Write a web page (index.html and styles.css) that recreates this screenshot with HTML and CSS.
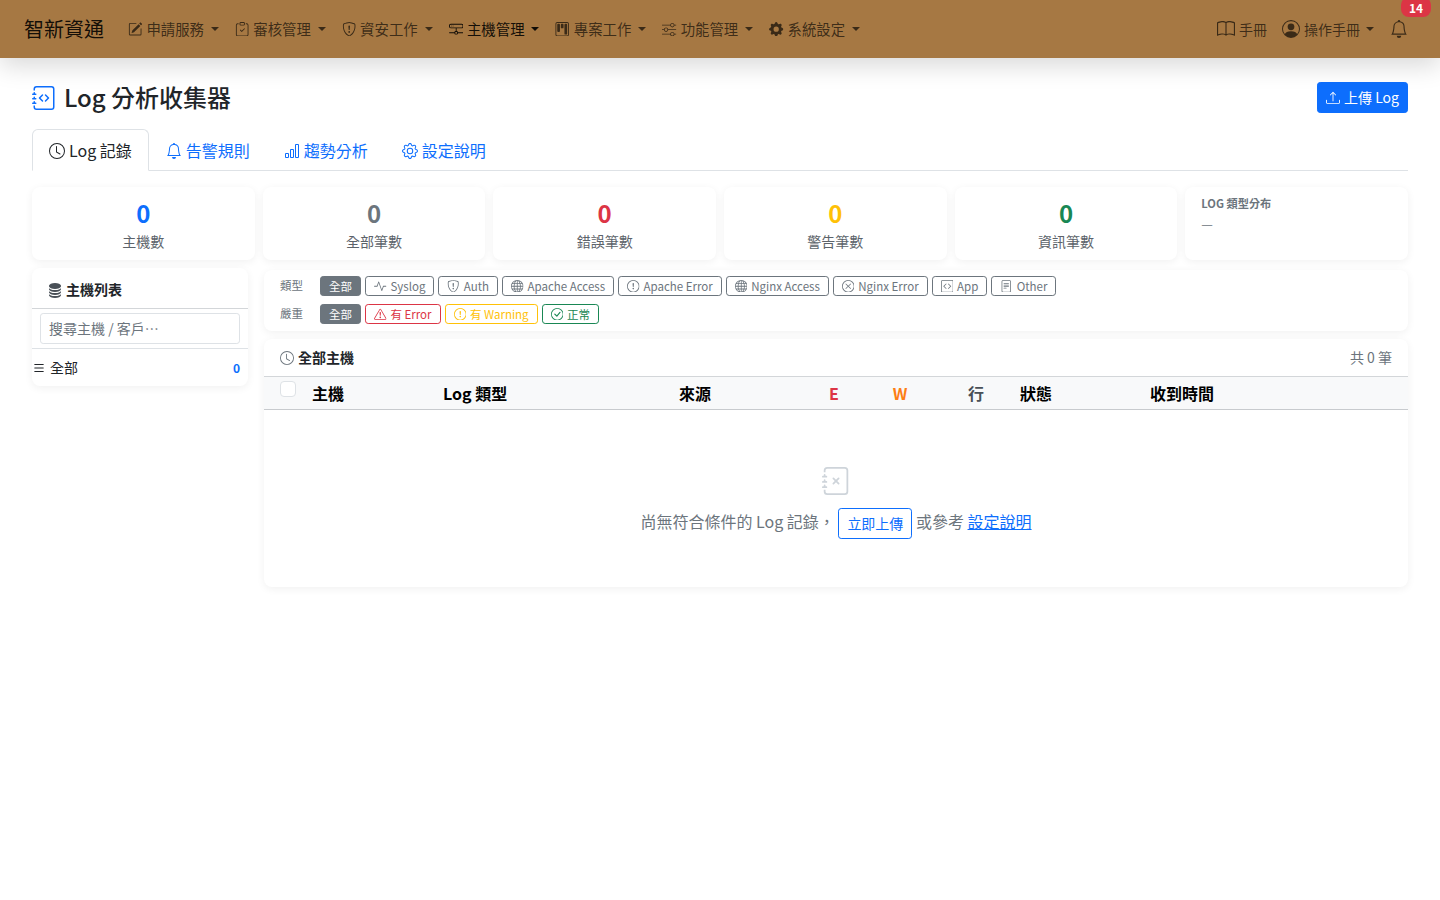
FILE: index.html
```html
<!DOCTYPE html>
<html lang="zh-Hant">
<head>
<meta charset="utf-8">
<title>Log 分析收集器</title>
<link rel="stylesheet" href="styles.css">
</head>
<body>
<svg class="sprite" xmlns="http://www.w3.org/2000/svg" aria-hidden="true">
<symbol id="pencil" viewBox="0 0 16 16"><path d="M15.502 1.94a.5.5 0 0 1 0 .706L14.459 3.69l-2-2L13.502.646a.5.5 0 0 1 .707 0l1.293 1.293zm-1.75 2.456-2-2L4.939 9.21a.5.5 0 0 0-.121.196l-.805 2.414a.25.25 0 0 0 .316.316l2.414-.805a.5.5 0 0 0 .196-.12l6.813-6.814z"/><path fill-rule="evenodd" d="M1 13.5A1.5 1.5 0 0 0 2.5 15h11a1.5 1.5 0 0 0 1.5-1.5v-6a.5.5 0 0 0-1 0v6a.5.5 0 0 1-.5.5h-11a.5.5 0 0 1-.5-.5v-11a.5.5 0 0 1 .5-.5H9a.5.5 0 0 0 0-1H2.5A1.5 1.5 0 0 0 1 2.5z"/></symbol>
<symbol id="clipcheck" viewBox="0 0 16 16"><path fill-rule="evenodd" d="M10.854 7.146a.5.5 0 0 1 0 .708l-3 3a.5.5 0 0 1-.708 0l-1.5-1.5a.5.5 0 1 1 .708-.708L7.5 9.793l2.646-2.647a.5.5 0 0 1 .708 0"/><path d="M4 1.5H3a2 2 0 0 0-2 2V14a2 2 0 0 0 2 2h10a2 2 0 0 0 2-2V3.5a2 2 0 0 0-2-2h-1v1h1a1 1 0 0 1 1 1V14a1 1 0 0 1-1 1H3a1 1 0 0 1-1-1V3.5a1 1 0 0 1 1-1h1z"/><path d="M9.5 1a.5.5 0 0 1 .5.5v1a.5.5 0 0 1-.5.5h-3a.5.5 0 0 1-.5-.5v-1a.5.5 0 0 1 .5-.5zm-3-1A1.5 1.5 0 0 0 5 1.5v1A1.5 1.5 0 0 0 6.5 4h3A1.5 1.5 0 0 0 11 2.5v-1A1.5 1.5 0 0 0 9.5 0z"/></symbol>
<symbol id="shield" viewBox="0 0 16 16"><path d="M5.338 1.59a61 61 0 0 0-2.837.856.48.48 0 0 0-.328.39c-.554 4.157.726 7.19 2.253 9.188a10.7 10.7 0 0 0 2.287 2.233c.346.244.652.42.893.533q.18.085.293.118a1 1 0 0 0 .101.025 1 1 0 0 0 .1-.025q.114-.034.294-.118c.24-.113.547-.29.893-.533a10.7 10.7 0 0 0 2.287-2.233c1.527-1.997 2.807-5.031 2.253-9.188a.48.48 0 0 0-.328-.39c-.651-.213-1.75-.56-2.837-.855C9.552 1.29 8.531 1.067 8 1.067c-.53 0-1.552.223-2.662.524zM5.072.56C6.157.265 7.31 0 8 0s1.843.265 2.928.56c1.11.3 2.229.655 2.887.87a1.54 1.54 0 0 1 1.044 1.262c.596 4.477-.787 7.795-2.465 9.99a11.8 11.8 0 0 1-2.517 2.453 7 7 0 0 1-1.048.625c-.28.132-.581.24-.829.24s-.548-.108-.829-.24a7 7 0 0 1-1.048-.625 11.8 11.8 0 0 1-2.517-2.453C1.928 10.487.545 7.169 1.141 2.692A1.54 1.54 0 0 1 2.185 1.43 63 63 0 0 1 5.072.56"/><path d="M7.001 11a1 1 0 1 1 2 0 1 1 0 0 1-2 0M7.1 4.995a.905.905 0 1 1 1.8 0l-.35 3.507a.553.553 0 0 1-1.1 0z"/></symbol>
<symbol id="hdd" viewBox="0 0 16 16"><path d="M4.5 5a.5.5 0 1 0 0-1 .5.5 0 0 0 0 1M3 4.5a.5.5 0 1 1-1 0 .5.5 0 0 1 1 0"/><path d="M0 4a2 2 0 0 1 2-2h12a2 2 0 0 1 2 2v1a2 2 0 0 1-2 2H8.5v3a1.5 1.5 0 0 1 1.5 1.5h5.5a.5.5 0 0 1 0 1H10A1.5 1.5 0 0 1 8.5 14h-1A1.5 1.5 0 0 1 6 12.5H.5a.5.5 0 0 1 0-1H6A1.5 1.5 0 0 1 7.5 10V7H2a2 2 0 0 1-2-2zm1 0v1a1 1 0 0 0 1 1h12a1 1 0 0 0 1-1V4a1 1 0 0 0-1-1H2a1 1 0 0 0-1 1m6 7.5v1a.5.5 0 0 0 .5.5h1a.5.5 0 0 0 .5-.5v-1a.5.5 0 0 0-.5-.5h-1a.5.5 0 0 0-.5.5"/></symbol>
<symbol id="kanban" viewBox="0 0 16 16"><path d="M13.5 1a1 1 0 0 1 1 1v12a1 1 0 0 1-1 1h-11a1 1 0 0 1-1-1V2a1 1 0 0 1 1-1zm-11-1a2 2 0 0 0-2 2v12a2 2 0 0 0 2 2h11a2 2 0 0 0 2-2V2a2 2 0 0 0-2-2z"/><path d="M6.5 3a1 1 0 0 1 1-1h1a1 1 0 0 1 1 1v3a1 1 0 0 1-1 1h-1a1 1 0 0 1-1-1zm-4 0a1 1 0 0 1 1-1h1a1 1 0 0 1 1 1v7a1 1 0 0 1-1 1h-1a1 1 0 0 1-1-1zm8 0a1 1 0 0 1 1-1h1a1 1 0 0 1 1 1v10a1 1 0 0 1-1 1h-1a1 1 0 0 1-1-1z"/></symbol>
<symbol id="sliders" viewBox="0 0 16 16"><path fill-rule="evenodd" d="M11.5 2a1.5 1.5 0 1 0 0 3 1.5 1.5 0 0 0 0-3M9.05 3a2.5 2.5 0 0 1 4.9 0H16v1h-2.05a2.5 2.5 0 0 1-4.9 0H0V3zM4.5 7a1.5 1.5 0 1 0 0 3 1.5 1.5 0 0 0 0-3M2.05 8a2.5 2.5 0 0 1 4.9 0H16v1H6.95a2.5 2.5 0 0 1-4.9 0H0V8zm9.45 4a1.5 1.5 0 1 0 0 3 1.5 1.5 0 0 0 0-3m-2.45 1a2.5 2.5 0 0 1 4.9 0H16v1h-2.05a2.5 2.5 0 0 1-4.9 0H0v-1z"/></symbol>
<symbol id="gearfill" viewBox="0 0 16 16"><path d="M9.405 1.05c-.413-1.4-2.397-1.4-2.81 0l-.1.34a1.464 1.464 0 0 1-2.105.872l-.31-.17c-1.283-.698-2.686.705-1.987 1.987l.169.311c.446.82.023 1.841-.872 2.105l-.34.1c-1.4.413-1.4 2.397 0 2.81l.34.1a1.464 1.464 0 0 1 .872 2.105l-.17.31c-.698 1.283.705 2.686 1.987 1.987l.311-.169a1.464 1.464 0 0 1 2.105.872l.1.34c.413 1.4 2.397 1.4 2.81 0l.1-.34a1.464 1.464 0 0 1 2.105-.872l.31.17c1.283.698 2.686-.705 1.987-1.987l-.169-.311a1.464 1.464 0 0 1 .872-2.105l.34-.1c1.4-.413 1.4-2.397 0-2.81l-.34-.1a1.464 1.464 0 0 1-.872-2.105l.17-.31c.698-1.283-.705-2.686-1.987-1.987l-.311.169a1.464 1.464 0 0 1-2.105-.872zM8 10.93a2.929 2.929 0 1 1 0-5.86 2.929 2.929 0 0 1 0 5.858z"/></symbol>
<symbol id="book" viewBox="0 0 16 16"><path d="M1 2.828c.885-.37 2.154-.769 3.388-.893 1.33-.134 2.458.063 3.112.752v9.746c-.935-.53-2.12-.603-3.213-.493-1.18.12-2.37.461-3.287.811zm7.5-.141c.654-.689 1.782-.886 3.112-.752 1.234.124 2.503.523 3.388.893v9.923c-.918-.35-2.107-.692-3.287-.81-1.094-.111-2.278-.039-3.213.492zM8 1.783C7.015.936 5.587.81 4.287.94c-1.514.153-3.042.672-3.994 1.105A.5.5 0 0 0 0 2.5v11a.5.5 0 0 0 .707.455c.882-.4 2.303-.881 3.68-1.02 1.409-.142 2.59.087 3.223.877a.5.5 0 0 0 .78 0c.633-.79 1.814-1.019 3.222-.877 1.378.139 2.8.62 3.681 1.02A.5.5 0 0 0 16 13.5v-11a.5.5 0 0 0-.293-.455c-.952-.433-2.48-.952-3.994-1.105C10.413.809 8.985.936 8 1.783"/></symbol>
<symbol id="person" viewBox="0 0 16 16"><path d="M11 6a3 3 0 1 1-6 0 3 3 0 0 1 6 0"/><path fill-rule="evenodd" d="M0 8a8 8 0 1 1 16 0A8 8 0 0 1 0 8m8-7a7 7 0 0 0-5.468 11.37C3.242 11.226 4.805 10 8 10s4.757 1.225 5.468 2.37A7 7 0 0 0 8 1"/></symbol>
<symbol id="bell" viewBox="0 0 16 16"><path d="M8 16a2 2 0 0 0 2-2H6a2 2 0 0 0 2 2M8 1.918l-.797.161A4 4 0 0 0 4 6c0 .628-.134 2.197-.459 3.742-.16.767-.376 1.566-.663 2.258h10.244c-.287-.692-.502-1.49-.663-2.258C12.134 8.197 12 6.628 12 6a4 4 0 0 0-3.203-3.92zM14.22 12c.223.447.481.801.78 1H1c.299-.199.557-.553.78-1C2.68 10.2 3 6.88 3 6c0-2.42 1.72-4.44 4.005-4.901a1 1 0 1 1 1.99 0A5 5 0 0 1 13 6c0 .88.32 4.2 1.22 6"/></symbol>
<symbol id="clock" viewBox="0 0 16 16"><path d="M8 3.5a.5.5 0 0 0-1 0V9a.5.5 0 0 0 .252.434l3.5 2a.5.5 0 0 0 .496-.868L8 8.71z"/><path d="M8 16A8 8 0 1 0 8 0a8 8 0 0 0 0 16m7-8A7 7 0 1 1 1 8a7 7 0 0 1 14 0"/></symbol>
<symbol id="barchart" viewBox="0 0 16 16"><path d="M4 11H2v3h2zm5-4H7v7h2zm5-5v12h-2V2zm-2-1a1 1 0 0 0-1 1v12a1 1 0 0 0 1 1h2a1 1 0 0 0 1-1V2a1 1 0 0 0-1-1zM6 7a1 1 0 0 1 1-1h2a1 1 0 0 1 1 1v7a1 1 0 0 1-1 1H7a1 1 0 0 1-1-1zm-5 4a1 1 0 0 1 1-1h2a1 1 0 0 1 1 1v3a1 1 0 0 1-1 1H2a1 1 0 0 1-1-1z"/></symbol>
<symbol id="gear" viewBox="0 0 16 16"><path d="M8 4.754a3.246 3.246 0 1 0 0 6.492 3.246 3.246 0 0 0 0-6.492M5.754 8a2.246 2.246 0 1 1 4.492 0 2.246 2.246 0 0 1-4.492 0"/><path d="M9.796 1.343c-.527-1.79-3.065-1.79-3.592 0l-.094.319a.873.873 0 0 1-1.255.52l-.292-.16c-1.64-.892-3.433.902-2.54 2.541l.159.292a.873.873 0 0 1-.52 1.255l-.319.094c-1.79.527-1.79 3.065 0 3.592l.319.094a.873.873 0 0 1 .52 1.255l-.16.292c-.892 1.64.901 3.434 2.541 2.54l.292-.159a.873.873 0 0 1 1.255.52l.094.319c.527 1.79 3.065 1.79 3.592 0l.094-.319a.873.873 0 0 1 1.255-.52l.292.16c1.64.893 3.434-.902 2.54-2.541l-.159-.292a.873.873 0 0 1 .52-1.255l.319-.094c1.79-.527 1.79-3.065 0-3.592l-.319-.094a.873.873 0 0 1-.52-1.255l.16-.292c.893-1.64-.902-3.433-2.541-2.54l-.292.159a.873.873 0 0 1-1.255-.52zm-2.633.283c.246-.835 1.428-.835 1.674 0l.094.319a1.873 1.873 0 0 0 2.693 1.115l.291-.16c.764-.415 1.6.42 1.184 1.185l-.159.292a1.873 1.873 0 0 0 1.116 2.692l.318.094c.835.246.835 1.428 0 1.674l-.319.094a1.873 1.873 0 0 0-1.115 2.693l.16.291c.415.764-.42 1.6-1.185 1.184l-.291-.159a1.873 1.873 0 0 0-2.693 1.116l-.094.318c-.246.835-1.428.835-1.674 0l-.094-.319a1.873 1.873 0 0 0-2.692-1.115l-.292.16c-.764.415-1.6-.42-1.184-1.185l.159-.291A1.873 1.873 0 0 0 1.945 8.93l-.319-.094c-.835-.246-.835-1.428 0-1.674l.319-.094A1.873 1.873 0 0 0 3.06 4.377l-.16-.292c-.415-.764.42-1.6 1.185-1.184l.292.159a1.873 1.873 0 0 0 2.692-1.115z"/></symbol>
<symbol id="jcode" viewBox="0 0 16 16"><path d="M8.646 5.646a.5.5 0 0 1 .708 0l2 2a.5.5 0 0 1 0 .708l-2 2a.5.5 0 0 1-.708-.708L10.293 8 8.646 6.354a.5.5 0 0 1 0-.708m-1.292 0a.5.5 0 0 0-.708 0l-2 2a.5.5 0 0 0 0 .708l2 2a.5.5 0 0 0 .708-.708L5.707 8l1.647-1.646a.5.5 0 0 0 0-.708"/><path d="M3 0h10a2 2 0 0 1 2 2v12a2 2 0 0 1-2 2H3a2 2 0 0 1-2-2v-1h1v1a1 1 0 0 0 1 1h10a1 1 0 0 0 1-1V2a1 1 0 0 0-1-1H3a1 1 0 0 0-1 1v1H1V2a2 2 0 0 1 2-2"/><path d="M1 5v-.5a.5.5 0 0 1 1 0V5h.5a.5.5 0 0 1 0 1h-2a.5.5 0 0 1 0-1zm0 3v-.5a.5.5 0 0 1 1 0V8h.5a.5.5 0 0 1 0 1h-2a.5.5 0 0 1 0-1zm0 3v-.5a.5.5 0 0 1 1 0v.5h.5a.5.5 0 0 1 0 1h-2a.5.5 0 0 1 0-1z"/></symbol>
<symbol id="jx" viewBox="0 0 16 16"><path d="M6.146 6.146a.5.5 0 0 1 .708 0L8 7.293l1.146-1.147a.5.5 0 1 1 .708.708L8.707 8l1.147 1.146a.5.5 0 0 1-.708.708L8 8.707 6.854 9.854a.5.5 0 0 1-.708-.708L7.293 8 6.146 6.854a.5.5 0 0 1 0-.708"/><path d="M3 0h10a2 2 0 0 1 2 2v12a2 2 0 0 1-2 2H3a2 2 0 0 1-2-2v-1h1v1a1 1 0 0 0 1 1h10a1 1 0 0 0 1-1V2a1 1 0 0 0-1-1H3a1 1 0 0 0-1 1v1H1V2a2 2 0 0 1 2-2"/><path d="M1 5v-.5a.5.5 0 0 1 1 0V5h.5a.5.5 0 0 1 0 1h-2a.5.5 0 0 1 0-1zm0 3v-.5a.5.5 0 0 1 1 0V8h.5a.5.5 0 0 1 0 1h-2a.5.5 0 0 1 0-1zm0 3v-.5a.5.5 0 0 1 1 0v.5h.5a.5.5 0 0 1 0 1h-2a.5.5 0 0 1 0-1z"/></symbol>
<symbol id="upload" viewBox="0 0 16 16"><path d="M.5 9.9a.5.5 0 0 1 .5.5v2.5a1 1 0 0 0 1 1h12a1 1 0 0 0 1-1v-2.5a.5.5 0 0 1 1 0v2.5a2 2 0 0 1-2 2H2a2 2 0 0 1-2-2v-2.5a.5.5 0 0 1 .5-.5"/><path d="M7.646 1.146a.5.5 0 0 1 .708 0l3 3a.5.5 0 0 1-.708.708L8.5 2.707V11.5a.5.5 0 0 1-1 0V2.707L5.354 4.854a.5.5 0 1 1-.708-.708z"/></symbol>
<symbol id="activity" viewBox="0 0 16 16"><path fill-rule="evenodd" d="M6 2a.5.5 0 0 1 .47.33L10 12.036l1.53-4.208A.5.5 0 0 1 12 7.5h3.5a.5.5 0 0 1 0 1h-3.15l-1.88 5.17a.5.5 0 0 1-.94 0L6 3.964 4.47 8.171A.5.5 0 0 1 4 8.5H.5a.5.5 0 0 1 0-1h3.15l1.88-5.17A.5.5 0 0 1 6 2"/></symbol>
<symbol id="globe" viewBox="0 0 16 16"><path d="M0 8a8 8 0 1 1 16 0A8 8 0 0 1 0 8m7.5-6.923c-.67.204-1.335.82-1.887 1.855A8 8 0 0 0 5.145 4H7.5zM4.09 4a9.3 9.3 0 0 1 .64-1.539 7 7 0 0 1 .597-.933A7.03 7.03 0 0 0 2.255 4zm-.582 3.5c.03-.877.138-1.718.312-2.5H1.674a7 7 0 0 0-.656 2.5zM4.847 5a12.5 12.5 0 0 0-.338 2.5H7.5V5zM8.5 5v2.5h2.99a12.5 12.5 0 0 0-.337-2.5zM4.51 8.5a12.5 12.5 0 0 0 .337 2.5H7.5V8.5zm3.99 0V11h2.653c.187-.765.306-1.608.338-2.5zM5.145 12q.208.58.468 1.068c.552 1.035 1.218 1.65 1.887 1.855V12zm.182 2.472a7 7 0 0 1-.597-.933A9.3 9.3 0 0 1 4.09 12H2.255a7 7 0 0 0 3.072 2.472M3.82 11a13.7 13.7 0 0 1-.312-2.5h-2.49c.062.89.291 1.733.656 2.5zm6.853 3.472A7 7 0 0 0 13.745 12H11.91a9.3 9.3 0 0 1-.64 1.539 7 7 0 0 1-.597.933M8.5 12v2.923c.67-.204 1.335-.82 1.887-1.855q.26-.487.468-1.068zm3.68-1h2.146c.365-.767.594-1.61.656-2.5h-2.49a13.7 13.7 0 0 1-.312 2.5m2.802-3.5a7 7 0 0 0-.656-2.5H12.18c.174.782.282 1.623.312 2.5zM11.27 2.461c.247.464.462.98.64 1.539h1.835a7 7 0 0 0-3.072-2.472c.218.284.418.598.597.933M10.855 4a8 8 0 0 0-.468-1.068C9.835 1.897 9.17 1.282 8.5 1.077V4z"/></symbol>
<symbol id="excl" viewBox="0 0 16 16"><path d="M8 15A7 7 0 1 1 8 1a7 7 0 0 1 0 14m0 1A8 8 0 1 0 8 0a8 8 0 0 0 0 16"/><path d="M7.002 11a1 1 0 1 1 2 0 1 1 0 0 1-2 0M7.1 4.995a.905.905 0 1 1 1.8 0l-.35 3.507a.552.552 0 0 1-1.1 0z"/></symbol>
<symbol id="xcircle" viewBox="0 0 16 16"><path d="M8 15A7 7 0 1 1 8 1a7 7 0 0 1 0 14m0 1A8 8 0 1 0 8 0a8 8 0 0 0 0 16"/><path d="M4.646 4.646a.5.5 0 0 1 .708 0L8 7.293l2.646-2.647a.5.5 0 0 1 .708.708L8.707 8l2.647 2.646a.5.5 0 0 1-.708.708L8 8.707l-2.646 2.647a.5.5 0 0 1-.708-.708L7.293 8 4.646 5.354a.5.5 0 0 1 0-.708"/></symbol>
<symbol id="check" viewBox="0 0 16 16"><path d="M8 15A7 7 0 1 1 8 1a7 7 0 0 1 0 14m0 1A8 8 0 1 0 8 0a8 8 0 0 0 0 16"/><path d="m10.97 4.97-.02.022-3.473 4.425-2.093-2.094a.75.75 0 0 0-1.06 1.06L6.97 11.03a.75.75 0 0 0 1.079-.02l3.992-4.99a.75.75 0 0 0-1.071-1.05"/></symbol>
<symbol id="codesq" viewBox="0 0 16 16"><path d="M14 1a1 1 0 0 1 1 1v12a1 1 0 0 1-1 1H2a1 1 0 0 1-1-1V2a1 1 0 0 1 1-1zM2 0a2 2 0 0 0-2 2v12a2 2 0 0 0 2 2h12a2 2 0 0 0 2-2V2a2 2 0 0 0-2-2z"/><path d="M6.854 4.646a.5.5 0 0 1 0 .708L4.207 8l2.647 2.646a.5.5 0 0 1-.708.708l-3-3a.5.5 0 0 1 0-.708l3-3a.5.5 0 0 1 .708 0m2.292 0a.5.5 0 0 0 0 .708L11.793 8l-2.647 2.646a.5.5 0 0 0 .708.708l3-3a.5.5 0 0 0 0-.708l-3-3a.5.5 0 0 0-.708 0"/></symbol>
<symbol id="filetext" viewBox="0 0 16 16"><path d="M5 4a.5.5 0 0 0 0 1h6a.5.5 0 0 0 0-1zm-.5 2.5A.5.5 0 0 1 5 6h6a.5.5 0 0 1 0 1H5a.5.5 0 0 1-.5-.5M5 8a.5.5 0 0 0 0 1h6a.5.5 0 0 0 0-1zm0 2a.5.5 0 0 0 0 1h3a.5.5 0 0 0 0-1z"/><path d="M2 2a2 2 0 0 1 2-2h8a2 2 0 0 1 2 2v12a2 2 0 0 1-2 2H4a2 2 0 0 1-2-2zm10-1H4a1 1 0 0 0-1 1v12a1 1 0 0 0 1 1h8a1 1 0 0 0 1-1V2a1 1 0 0 0-1-1"/></symbol>
<symbol id="warn" viewBox="0 0 16 16"><path d="M7.938 2.016A.13.13 0 0 1 8.002 2a.13.13 0 0 1 .063.016.15.15 0 0 1 .054.057l6.857 11.667c.036.06.035.124.002.183a.2.2 0 0 1-.054.06.1.1 0 0 1-.066.017H1.146a.1.1 0 0 1-.066-.017.2.2 0 0 1-.054-.06.18.18 0 0 1 .002-.183L7.884 2.073a.15.15 0 0 1 .054-.057m1.044-.45a1.13 1.13 0 0 0-1.96 0L.165 13.233c-.457.778.091 1.767.98 1.767h13.713c.889 0 1.438-.99.98-1.767z"/><path d="M7.002 12a1 1 0 1 1 2 0 1 1 0 0 1-2 0M7.1 5.995a.905.905 0 1 1 1.8 0l-.35 3.507a.552.552 0 0 1-1.1 0z"/></symbol>
<symbol id="db" viewBox="0 0 16 16"><path d="M3.904 1.777C4.978 1.289 6.427 1 8 1s3.022.289 4.096.777C13.125 2.245 14 2.993 14 4s-.875 1.755-1.904 2.223C11.022 6.711 9.573 7 8 7s-3.022-.289-4.096-.777C2.875 5.755 2 5.007 2 4s.875-1.755 1.904-2.223"/><path d="M2 6.161V7c0 1.007.875 1.755 1.904 2.223C4.978 9.71 6.427 10 8 10s3.022-.289 4.096-.777C13.125 8.755 14 8.007 14 7v-.839c-.457.432-1.004.751-1.49.972C11.278 7.693 9.682 8 8 8s-3.278-.307-4.51-.867c-.486-.22-1.033-.54-1.49-.972"/><path d="M2 9.161V10c0 1.007.875 1.755 1.904 2.223C4.978 12.711 6.427 13 8 13s3.022-.289 4.096-.777C13.125 11.755 14 11.007 14 10v-.839c-.457.432-1.004.751-1.49.972-1.232.56-2.828.867-4.51.867s-3.278-.307-4.51-.867c-.486-.22-1.033-.54-1.49-.972"/><path d="M2 12.161V13c0 1.007.875 1.755 1.904 2.223C4.978 15.711 6.427 16 8 16s3.022-.289 4.096-.777C13.125 14.755 14 14.007 14 13v-.839c-.457.432-1.004.751-1.49.972-1.232.56-2.828.867-4.51.867s-3.278-.307-4.51-.867c-.486-.22-1.033-.54-1.49-.972"/></symbol>
<symbol id="list" viewBox="0 0 16 16"><path fill-rule="evenodd" d="M2.5 12a.5.5 0 0 1 .5-.5h10a.5.5 0 0 1 0 1H3a.5.5 0 0 1-.5-.5m0-4a.5.5 0 0 1 .5-.5h10a.5.5 0 0 1 0 1H3a.5.5 0 0 1-.5-.5m0-4a.5.5 0 0 1 .5-.5h10a.5.5 0 0 1 0 1H3a.5.5 0 0 1-.5-.5"/></symbol>
</svg>

<nav class="navbar">
  <a class="brand">智新資通</a>
  <ul class="nav-list">
    <li class="nav-item"><svg class="ico"><use href="#pencil"/></svg>申請服務<i class="caret"></i></li>
    <li class="nav-item"><svg class="ico"><use href="#clipcheck"/></svg>審核管理<i class="caret"></i></li>
    <li class="nav-item"><svg class="ico"><use href="#shield"/></svg>資安工作<i class="caret"></i></li>
    <li class="nav-item is-active"><svg class="ico"><use href="#hdd"/></svg>主機管理<i class="caret"></i></li>
    <li class="nav-item"><svg class="ico"><use href="#kanban"/></svg>專案工作<i class="caret"></i></li>
    <li class="nav-item"><svg class="ico"><use href="#sliders"/></svg>功能管理<i class="caret"></i></li>
    <li class="nav-item"><svg class="ico"><use href="#gearfill"/></svg>系統設定<i class="caret"></i></li>
  </ul>
  <ul class="nav-right">
    <li class="nav-item nav-manual"><svg class="ico ico-book"><use href="#book"/></svg>手冊</li>
    <li class="nav-item"><svg class="ico ico-person"><use href="#person"/></svg>操作手冊<i class="caret"></i></li>
    <li class="nav-bell"><svg class="ico ico-bell"><use href="#bell"/></svg><span class="badge">14</span></li>
  </ul>
</nav>

<main class="page">
  <header class="page-head">
    <h1 class="page-title"><svg class="ico ico-title"><use href="#jcode"/></svg>Log 分析收集器</h1>
    <button class="btn-upload"><svg class="ico"><use href="#upload"/></svg>上傳 Log</button>
  </header>

  <ul class="tabs">
    <li class="tab is-active"><svg class="ico"><use href="#clock"/></svg>Log 記錄</li>
    <li class="tab"><svg class="ico"><use href="#bell"/></svg>告警規則</li>
    <li class="tab"><svg class="ico"><use href="#barchart"/></svg>趨勢分析</li>
    <li class="tab"><svg class="ico"><use href="#gear"/></svg>設定說明</li>
  </ul>

  <section class="stats">
    <div class="card stat"><div class="stat-num c-blue">0</div><div class="stat-label">主機數</div></div>
    <div class="card stat"><div class="stat-num c-gray">0</div><div class="stat-label">全部筆數</div></div>
    <div class="card stat"><div class="stat-num c-red">0</div><div class="stat-label">錯誤筆數</div></div>
    <div class="card stat"><div class="stat-num c-yellow">0</div><div class="stat-label">警告筆數</div></div>
    <div class="card stat"><div class="stat-num c-green">0</div><div class="stat-label">資訊筆數</div></div>
    <div class="card stat-dist"><div class="dist-title">LOG 類型分布</div><div class="dist-value">—</div></div>
  </section>

  <section class="layout">
    <aside class="card side">
      <div class="side-head"><svg class="ico"><use href="#db"/></svg>主機列表</div>
      <div class="side-search"><input class="search-input" type="text" placeholder="搜尋主機 / 客戶…"></div>
      <div class="side-row"><svg class="ico"><use href="#list"/></svg><span class="side-name">全部</span><span class="side-count">0</span></div>
    </aside>

    <div class="content">
      <div class="card filters">
        <div class="filter-row">
          <span class="filter-label">類型</span>
          <span class="pill pill-on">全部</span>
          <span class="pill"><svg class="ico"><use href="#activity"/></svg>Syslog</span>
          <span class="pill"><svg class="ico"><use href="#shield"/></svg>Auth</span>
          <span class="pill"><svg class="ico"><use href="#globe"/></svg>Apache Access</span>
          <span class="pill"><svg class="ico"><use href="#excl"/></svg>Apache Error</span>
          <span class="pill"><svg class="ico"><use href="#globe"/></svg>Nginx Access</span>
          <span class="pill"><svg class="ico"><use href="#xcircle"/></svg>Nginx Error</span>
          <span class="pill"><svg class="ico"><use href="#codesq"/></svg>App</span>
          <span class="pill"><svg class="ico"><use href="#filetext"/></svg>Other</span>
        </div>
        <div class="filter-row">
          <span class="filter-label">嚴重</span>
          <span class="pill pill-on">全部</span>
          <span class="pill pill-red"><svg class="ico"><use href="#warn"/></svg>有 Error</span>
          <span class="pill pill-yellow"><svg class="ico"><use href="#excl"/></svg>有 Warning</span>
          <span class="pill pill-green"><svg class="ico"><use href="#check"/></svg>正常</span>
        </div>
      </div>

      <div class="card records">
        <div class="records-head">
          <div class="records-title"><svg class="ico"><use href="#clock"/></svg>全部主機</div>
          <div class="records-count">共 0 筆</div>
        </div>
        <table class="log-table">
          <thead>
            <tr>
              <th class="col-check"><span class="checkbox"></span></th>
              <th class="col-host">主機</th>
              <th class="col-type">Log 類型</th>
              <th class="col-src">來源</th>
              <th class="col-e">E</th>
              <th class="col-w">W</th>
              <th class="col-lines">行</th>
              <th class="col-state">狀態</th>
              <th>收到時間</th>
            </tr>
          </thead>
          <tbody>
            <tr><td class="empty" colspan="9">
              <svg class="ico ico-empty"><use href="#jx"/></svg>
              <div class="empty-text">尚無符合條件的 Log 記錄， <a class="btn-outline">立即上傳</a> 或參考 <a class="link">設定說明</a></div>
            </td></tr>
          </tbody>
        </table>
      </div>
    </div>
  </section>
</main>
</body>
</html>
```

FILE: styles.css
```css
* { box-sizing: border-box; }
html, body { margin: 0; padding: 0; }
body {
  font-family: "Noto Sans CJK TC", "Noto Sans", sans-serif;
  font-size: 16px;
  line-height: 1.5;
  color: #212529;
  background: #fff;
}
ul { list-style: none; margin: 0; padding: 0; }
.sprite { display: none; }
.ico { width: 1em; height: 1em; fill: currentColor; flex: none; display: inline-block; }

/* Navbar */
.navbar {
  height: 58px;
  background: #a67843;
  display: flex;
  align-items: center;
  padding: 0 31px 0 24px;
  box-shadow: 0 8px 24px rgba(0, 0, 0, .15);
  position: relative;
}
.brand { font-size: 20px; color: rgba(0, 0, 0, .9); margin-right: 16px; line-height: 30px; }
.nav-list, .nav-right { display: flex; align-items: center; }
.nav-right { margin-left: auto; }
.nav-item {
  display: flex;
  align-items: center;
  font-size: 14.4px;
  padding: 0 8px;
  color: rgba(0, 0, 0, .65);
  white-space: nowrap;
}
.nav-item .ico { margin-right: 4px; }
.nav-item.is-active { color: rgba(0, 0, 0, .9); }
.nav-right .nav-item { font-size: 14px; }
.nav-right .nav-manual { margin-right: -1px; }
.caret {
  width: 0; height: 0;
  margin-left: 6.9px;
  border-top: 4.2px solid currentColor;
  border-left: 4.2px solid transparent;
  border-right: 4.2px solid transparent;
}
.nav-right .caret { margin-left: 6.1px; }
.nav-item .ico-book { font-size: 18px; margin-right: 4px; }
.ico-person { font-size: 18px; }
.nav-bell { position: relative; margin-left: 8px; padding-right: 1px; color: rgba(0, 0, 0, .65); display: flex; }
.ico-bell { font-size: 18px; }
.badge {
  position: absolute;
  left: 11px; top: -23px;
  width: 30px; height: 20px;
  background: #dc3545;
  color: #fff;
  font-size: 12px;
  font-weight: 700;
  line-height: 22px;
  text-align: center;
  border-radius: 8px;
}

/* Page */
.page { padding: 24px 32px; }
.page-head { display: flex; justify-content: space-between; align-items: flex-start; height: 33px; }
.page-title { margin: 0; font-size: 24px; font-weight: 500; line-height: 29px; height: 29px; display: flex; align-items: center; }
.ico-title { color: #0d6efd; font-size: 24px; margin: 2px 8px 0 0; }
.btn-upload {
  display: flex; align-items: center;
  height: 31px;
  padding: 0 8px;
  background: #0d6efd;
  border: 1px solid #0d6efd;
  border-radius: 3.2px;
  color: #fff;
  font: inherit;
  font-size: 14px;
}
.btn-upload .ico { margin-right: 4px; }

/* Tabs */
.tabs { display: flex; margin-top: 14px; border-bottom: 1px solid #dee2e6; height: 42px; }
.tab {
  display: flex; align-items: center;
  padding: 0 16px;
  color: #0d6efd;
  border: 1px solid transparent;
  border-radius: 6px 6px 0 0;
  height: 42px;
}
.tab .ico { margin: 2px 4px 0 0; }
.tab.is-active { color: #212529; background: #fff; border-color: #dee2e6 #dee2e6 #fff; }

/* Cards */
.card { background: #fff; border-radius: 8px; box-shadow: 0 2px 8px rgba(0, 0, 0, .06); }

.stats { display: grid; grid-template-columns: repeat(6, 1fr); gap: 8px; margin-top: 16px; }
.stat { height: 73px; text-align: center; padding-top: 10px; }
.stat-num { font-size: 24px; font-weight: 700; line-height: 32px; }
.stat-label { font-size: 14px; line-height: 21px; margin-top: 2px; color: #5c636a; }
.c-blue { color: #0d6efd; }
.c-gray { color: #6c757d; }
.c-red { color: #dc3545; }
.c-yellow { color: #ffc107; }
.c-green { color: #198754; }
.stat-dist { padding: 7px 16px; height: 73px; }
.dist-title { font-size: 11.2px; font-weight: 700; color: #6c757d; line-height: 18px; }
.dist-value { font-size: 13px; color: #6c757d; line-height: 21px; margin-top: 1px; }

/* Layout */
.layout { display: flex; gap: 16px; margin-top: 8px; align-items: flex-start; }
.side { width: 216px; flex: none; }
.side-head { display: flex; align-items: center; gap: 3px; font-size: 14px; font-weight: 700; padding: 3px 16px 0; border-bottom: 1px solid #d3d6d9; line-height: 21px; height: 41px; }
.side-head .ico { color: #495057; font-size: 16px; margin-left: -1px; }
.side-search { padding: 4px 8px; border-bottom: 1px solid #dee2e6; height: 40px; }
.search-input {
  display: block; width: 100%;
  height: 31px;
  padding: 0 8px 2px;
  border: 1px solid #dee2e6;
  border-radius: 3.2px;
  font: inherit;
  font-size: 14px;
  color: #212529;
}
.search-input::placeholder { color: #6c757d; }
.side-row { display: flex; align-items: center; height: 37px; font-size: 14px; padding: 0 8px 0 0; }
.side-row .ico { margin-right: 4px; }
.side-name { flex: 1; }
.side-count { color: #0d6efd; font-size: 12px; font-weight: 700; }

.content { flex: 1; min-width: 0; display: flex; flex-direction: column; gap: 8px; margin-top: 2px; }
.filters { padding: 6px 16px 5px; height: 61px; }
.filter-row { display: flex; align-items: center; gap: 4px; height: 20px; margin-bottom: 8px; }
.filter-label { width: 36px; font-size: 11.5px; color: #6c757d; }
.pill {
  display: inline-flex; align-items: center;
  height: 20px;
  padding: 0 8px;
  border: 1px solid #6c757d;
  border-radius: 3.2px;
  font-size: 11.52px;
  line-height: 18px;
  color: #6c757d;
  white-space: nowrap;
}
.pill .ico { width: 12.5px; height: 12.5px; margin-right: 3.9px; }
.pill-on { background: #6c757d; color: #fff; }
.pill-red { border-color: #dc3545; color: #dc3545; }
.pill-yellow { border-color: #ffc107; color: #ffc107; }
.pill-green { border-color: #198754; color: #198754; }

.records-head { display: flex; justify-content: space-between; align-items: center; height: 37px; padding: 0 16px; font-size: 14px; }
.records-title { display: flex; align-items: center; gap: 4px; font-weight: 700; }
.records-title .ico { color: #6c757d; }
.records-count { color: #6c757d; }

.log-table { width: 100%; border-collapse: collapse; table-layout: fixed; }
.log-table th {
  text-align: left;
  background: #f8f9fa;
  border-top: 1px solid #d3d6d9;
  border-bottom: 1px solid #c8cbce;
  height: 33px;
  padding: 0 8px;
  font-weight: 700;
  color: #000;
}
.log-table .col-check { width: 40px; padding: 0 0 0 16px; vertical-align: top; }
.checkbox { display: block; width: 16px; height: 16px; margin-top: 4px; border: 1px solid #dee2e6; border-radius: 4px; background: #fff; }
.col-host { width: 131px; }
.col-type { width: 236px; }
.col-src { width: 135px; }
.log-table .col-e { width: 56px; text-align: center; color: #dc3545; }
.log-table .col-w { width: 76px; text-align: center; color: #fd7e14; }
.log-table .col-lines { width: 74px; padding: 0 8px 0 10px; text-align: center; color: #495057; }
.col-state { width: 130px; }
.empty { text-align: center; padding: 57px 8px 48px; color: #6c757d; }
.ico-empty { font-size: 28px; display: block; margin: 0 auto 13px; color: #ced4da; }
.empty-text { font-size: 16px; line-height: 24px; }
.btn-outline {
  display: inline-block;
  padding: 4px 8px;
  line-height: 21px;
  border: 1px solid #0d6efd;
  border-radius: 3.2px;
  color: #0d6efd;
  font-size: 14px;
  vertical-align: -1px;
}
.link { color: #0d6efd; text-decoration: underline; }
```
